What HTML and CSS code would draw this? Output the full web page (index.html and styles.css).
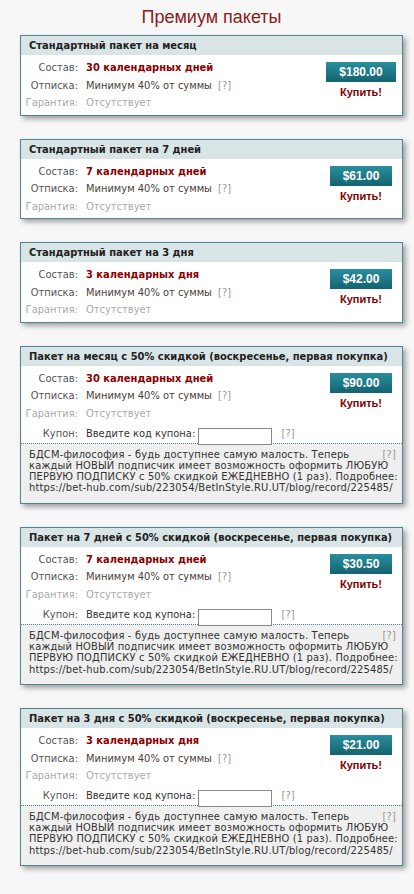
FILE: index.html
```html
<!DOCTYPE html>
<html lang="ru">
<head>
<meta charset="utf-8">
<title>Премиум пакеты</title>
<link rel="stylesheet" href="styles.css">
</head>
<body>
<div class="page">
  <h1 class="title">Премиум пакеты</h1>

  <div class="card">
    <div class="card-head">Стандартный пакет на месяц</div>
    <div class="card-body">
      <div class="info">
        <div class="label">Состав:</div><div class="value strong">30 календарных дней</div>
        <div class="label">Отписка:</div><div class="value">Минимум 40% от суммы <span class="q">[?]</span></div>
        <div class="label muted">Гарантия:</div><div class="value muted">Отсутствует</div>
      </div>
      <div class="buy">
        <div class="price">$180.00</div>
        <div class="buy-link">Купить!</div>
      </div>
    </div>
  </div>

  <div class="card">
    <div class="card-head">Стандартный пакет на 7 дней</div>
    <div class="card-body">
      <div class="info">
        <div class="label">Состав:</div><div class="value strong">7 календарных дней</div>
        <div class="label">Отписка:</div><div class="value">Минимум 40% от суммы <span class="q">[?]</span></div>
        <div class="label muted">Гарантия:</div><div class="value muted">Отсутствует</div>
      </div>
      <div class="buy">
        <div class="price">$61.00</div>
        <div class="buy-link">Купить!</div>
      </div>
    </div>
  </div>

  <div class="card">
    <div class="card-head">Стандартный пакет на 3 дня</div>
    <div class="card-body">
      <div class="info">
        <div class="label">Состав:</div><div class="value strong">3 календарных дня</div>
        <div class="label">Отписка:</div><div class="value">Минимум 40% от суммы <span class="q">[?]</span></div>
        <div class="label muted">Гарантия:</div><div class="value muted">Отсутствует</div>
      </div>
      <div class="buy">
        <div class="price">$42.00</div>
        <div class="buy-link">Купить!</div>
      </div>
    </div>
  </div>

  <div class="card">
    <div class="card-head">Пакет на месяц с 50% скидкой (воскресенье, первая покупка)</div>
    <div class="card-body">
      <div class="info">
        <div class="label">Состав:</div><div class="value strong">30 календарных дней</div>
        <div class="label">Отписка:</div><div class="value">Минимум 40% от суммы <span class="q">[?]</span></div>
        <div class="label muted">Гарантия:</div><div class="value muted">Отсутствует</div>
        <div class="label coupon-label">Купон:</div><div class="value coupon">Введите код купона: <input class="coupon-input" type="text"> <span class="q q-coupon">[?]</span></div>
      </div>
      <div class="buy">
        <div class="price">$90.00</div>
        <div class="buy-link">Купить!</div>
      </div>
    </div>
    <div class="desc"><span class="q q-desc">[?]</span>БДСМ-философия - будь доступнее самую малость. Теперь<br>каждый НОВЫЙ подписчик имеет возможность оформить ЛЮБУЮ<br>ПЕРВУЮ ПОДПИСКУ с 50% скидкой ЕЖЕДНЕВНО (1 раз). Подробнее:<br>https://bet-hub.com/sub/223054/BetInStyle.RU.UT/blog/record/225485/</div>
  </div>

  <div class="card">
    <div class="card-head">Пакет на 7 дней с 50% скидкой (воскресенье, первая покупка)</div>
    <div class="card-body">
      <div class="info">
        <div class="label">Состав:</div><div class="value strong">7 календарных дней</div>
        <div class="label">Отписка:</div><div class="value">Минимум 40% от суммы <span class="q">[?]</span></div>
        <div class="label muted">Гарантия:</div><div class="value muted">Отсутствует</div>
        <div class="label coupon-label">Купон:</div><div class="value coupon">Введите код купона: <input class="coupon-input" type="text"> <span class="q q-coupon">[?]</span></div>
      </div>
      <div class="buy">
        <div class="price">$30.50</div>
        <div class="buy-link">Купить!</div>
      </div>
    </div>
    <div class="desc"><span class="q q-desc">[?]</span>БДСМ-философия - будь доступнее самую малость. Теперь<br>каждый НОВЫЙ подписчик имеет возможность оформить ЛЮБУЮ<br>ПЕРВУЮ ПОДПИСКУ с 50% скидкой ЕЖЕДНЕВНО (1 раз). Подробнее:<br>https://bet-hub.com/sub/223054/BetInStyle.RU.UT/blog/record/225485/</div>
  </div>

  <div class="card">
    <div class="card-head">Пакет на 3 дня с 50% скидкой (воскресенье, первая покупка)</div>
    <div class="card-body">
      <div class="info">
        <div class="label">Состав:</div><div class="value strong">3 календарных дня</div>
        <div class="label">Отписка:</div><div class="value">Минимум 40% от суммы <span class="q">[?]</span></div>
        <div class="label muted">Гарантия:</div><div class="value muted">Отсутствует</div>
        <div class="label coupon-label">Купон:</div><div class="value coupon">Введите код купона: <input class="coupon-input" type="text"> <span class="q q-coupon">[?]</span></div>
      </div>
      <div class="buy">
        <div class="price">$21.00</div>
        <div class="buy-link">Купить!</div>
      </div>
    </div>
    <div class="desc"><span class="q q-desc">[?]</span>БДСМ-философия - будь доступнее самую малость. Теперь<br>каждый НОВЫЙ подписчик имеет возможность оформить ЛЮБУЮ<br>ПЕРВУЮ ПОДПИСКУ с 50% скидкой ЕЖЕДНЕВНО (1 раз). Подробнее:<br>https://bet-hub.com/sub/223054/BetInStyle.RU.UT/blog/record/225485/</div>
  </div>
</div>
</body>
</html>
```

FILE: styles.css
```css
html, body {
  margin: 0;
  padding: 0;
  background: #f7f7f7;
}

body {
  font-family: Tahoma, "DejaVu Sans Condensed", "DejaVu Sans", sans-serif;
  font-size: 11px;
  color: #333;
}

.page {
  padding: 0 11px 0 20px;
}

.title {
  margin: 0;
  padding-top: 6px;
  height: 29px;
  font-family: "Liberation Sans", Arial, sans-serif;
  font-weight: normal;
  font-size: 18px;
  line-height: 22px;
  text-align: center;
  color: #8b1c1c;
}

.card {
  border: 1px solid #4d8690;
  background: #fff;
  box-shadow: 3px 3px 5px rgba(0, 0, 0, 0.35);
  margin-bottom: 23px;
}

.card-head {
  height: 19px;
  line-height: 20px;
  padding: 0 8px;
  background: #d9e4e6;
  font-weight: bold;
  color: #222;
  white-space: nowrap;
}

.card-body {
  display: flex;
  padding: 4px 0 3px;
}

.info {
  flex: 1;
  display: grid;
  grid-template-columns: 57px 1fr;
  grid-auto-rows: 17.5px;
  column-gap: 8px;
  align-items: center;
  white-space: nowrap;
}

.label {
  text-align: right;
  color: #555;
}

.value {
  color: #4a4034;
}

.value.strong {
  font-weight: bold;
  color: #8b0000;
}

.muted,
.value.muted {
  color: #aaa;
}

.q {
  color: #999;
  margin-left: 3px;
}

.coupon-label,
.coupon {
  margin-top: 5px;
  height: 21px;
  line-height: 21px;
}

.coupon {
  color: #333;
}

.coupon-input {
  box-sizing: border-box;
  width: 74px;
  height: 17px;
  margin: 0;
  padding: 0 2px;
  border: 1px solid #888;
  background: #fff;
  vertical-align: -3px;
  font: inherit;
}

.q-coupon {
  margin-left: 6px;
}

.buy {
  width: 80px;
  padding-top: 3px;
  margin-right: 1px;
  display: flex;
  flex-direction: column;
  align-items: center;
}

.price {
  height: 20px;
  line-height: 20px;
  padding: 0 13px;
  background: linear-gradient(#2a8e9e, #146370);
  color: #fff;
  font-family: "Liberation Sans", Arial, sans-serif;
  font-weight: bold;
  font-size: 12px;
}

.buy-link {
  margin-top: 3px;
  line-height: 14px;
  font-family: "Liberation Sans", Arial, sans-serif;
  font-weight: bold;
  font-size: 11px;
  color: #800000;
}

.desc {
  border-top: 1px dotted #4d8690;
  background: #efefef;
  padding: 5px 8px 9px;
  font-size: 11px;
  line-height: 11.3px;
  letter-spacing: 0.17px;
  color: #333;
  white-space: nowrap;
}

.q-desc {
  float: right;
  margin-right: -2px;
}
```
